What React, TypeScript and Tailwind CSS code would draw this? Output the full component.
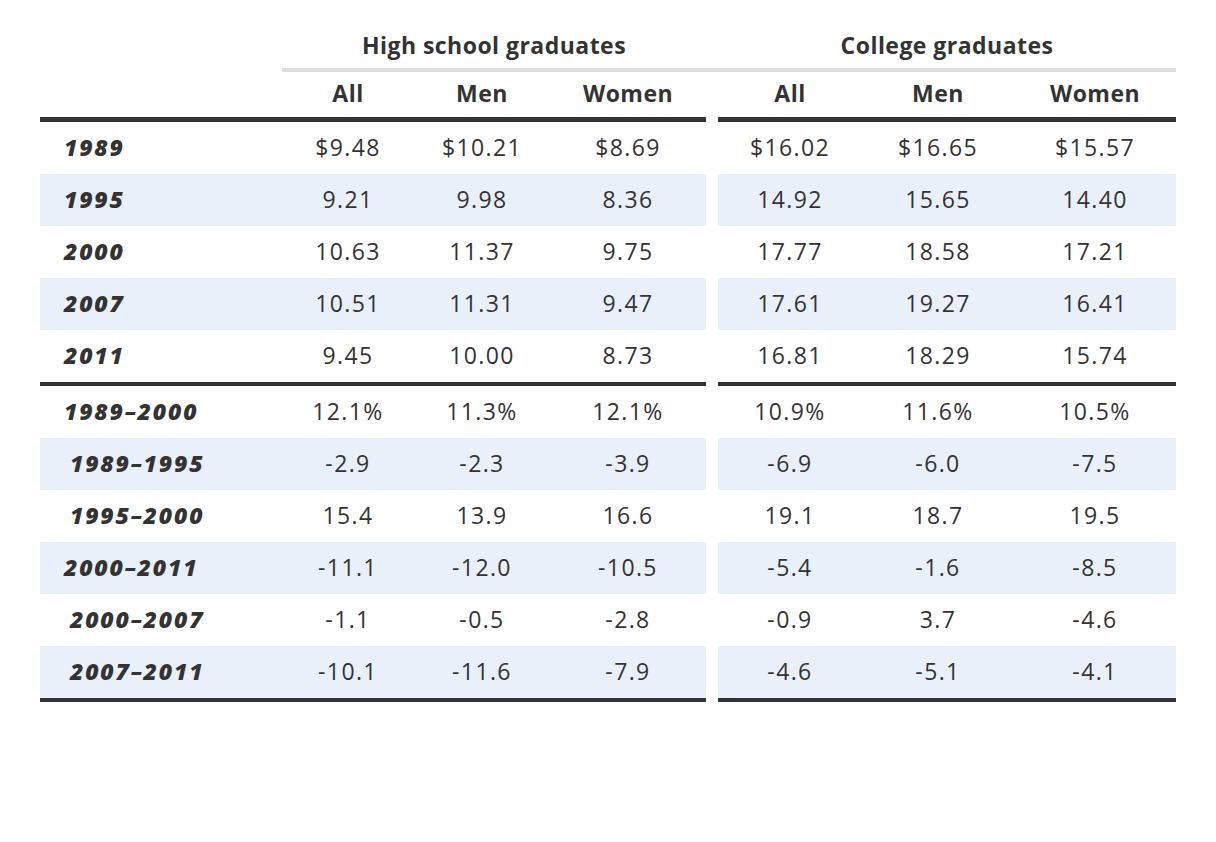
import React from 'react';

const COLS = 'grid grid-cols-[242px_132px_136px_156px_12px_144px_152px_162px]';

type Row = { label: string; indent?: boolean; hs: string[]; col: string[] };

const levels: Row[] = [
  { label: '1989', hs: ['$9.48', '$10.21', '$8.69'], col: ['$16.02', '$16.65', '$15.57'] },
  { label: '1995', hs: ['9.21', '9.98', '8.36'], col: ['14.92', '15.65', '14.40'] },
  { label: '2000', hs: ['10.63', '11.37', '9.75'], col: ['17.77', '18.58', '17.21'] },
  { label: '2007', hs: ['10.51', '11.31', '9.47'], col: ['17.61', '19.27', '16.41'] },
  { label: '2011', hs: ['9.45', '10.00', '8.73'], col: ['16.81', '18.29', '15.74'] },
];

const changes: Row[] = [
  { label: '1989–2000', hs: ['12.1%', '11.3%', '12.1%'], col: ['10.9%', '11.6%', '10.5%'] },
  { label: '1989–1995', indent: true, hs: ['-2.9', '-2.3', '-3.9'], col: ['-6.9', '-6.0', '-7.5'] },
  { label: '1995–2000', indent: true, hs: ['15.4', '13.9', '16.6'], col: ['19.1', '18.7', '19.5'] },
  { label: '2000–2011', hs: ['-11.1', '-12.0', '-10.5'], col: ['-5.4', '-1.6', '-8.5'] },
  { label: '2000–2007', indent: true, hs: ['-1.1', '-0.5', '-2.8'], col: ['-0.9', '3.7', '-4.6'] },
  { label: '2007–2011', indent: true, hs: ['-10.1', '-11.6', '-7.9'], col: ['-4.6', '-5.1', '-4.1'] },
];

function DataRow({ row, shaded }: { row: Row; shaded: boolean }) {
  const bg = shaded ? 'bg-[#eaf0f9]' : 'bg-white';
  const cell = `${bg} flex h-[52px] items-center justify-center pb-[2px] tracking-[0.06em]`;
  return (
    <div className={COLS}>
      <div
        className={`${bg} flex h-[52px] items-center pb-[2px] ${row.indent ? 'pl-[30px]' : 'pl-[24px]'} font-extrabold italic tracking-[0.08em]`}
      >
        {row.label}
      </div>
      {row.hs.map((v, i) => (
        <div key={`h${i}`} className={cell}>{v}</div>
      ))}
      <div />
      {row.col.map((v, i) => (
        <div key={`c${i}`} className={cell}>{v}</div>
      ))}
    </div>
  );
}

function Rule({ h }: { h: string }) {
  return (
    <div className={COLS}>
      <div className={`col-span-4 ${h} bg-[#333]`} />
      <div />
      <div className={`col-span-3 ${h} bg-[#333]`} />
    </div>
  );
}

export default function App() {
  return (
    <div className="h-[842px] w-[1216px] bg-white pl-[40px] text-[23px] text-[#333] font-['Open_Sans','Liberation_Sans',sans-serif]">
      {/* group headings */}
      <div className={COLS}>
        <div />
        <div className="col-span-3 flex h-[68px] items-end justify-center pb-[9px] font-bold leading-[28px] tracking-[0.02em]">
          High school graduates
        </div>
        <div />
        <div className="col-span-3 flex h-[68px] items-end justify-center pb-[9px] font-bold leading-[28px] tracking-[0.02em]">
          College graduates
        </div>
      </div>
      <div className={COLS}>
        <div />
        <div className="col-span-7 h-[4px] bg-[#dddddd]" />
      </div>
      {/* column headings */}
      <div className={COLS}>
        <div />
        {['All', 'Men', 'Women'].map((t) => (
          <div key={`hs-${t}`} className="flex h-[45px] items-center justify-center pb-[2px] font-bold tracking-[0.02em]">{t}</div>
        ))}
        <div />
        {['All', 'Men', 'Women'].map((t) => (
          <div key={`co-${t}`} className="flex h-[45px] items-center justify-center pb-[2px] font-bold tracking-[0.02em]">{t}</div>
        ))}
      </div>
      <Rule h="h-[5px]" />
      {levels.map((r, i) => (
        <DataRow key={r.label} row={r} shaded={i % 2 === 1} />
      ))}
      <Rule h="h-[4px]" />
      {changes.map((r, i) => (
        <DataRow key={r.label} row={r} shaded={i % 2 === 1} />
      ))}
      <Rule h="h-[4px]" />
    </div>
  );
}
